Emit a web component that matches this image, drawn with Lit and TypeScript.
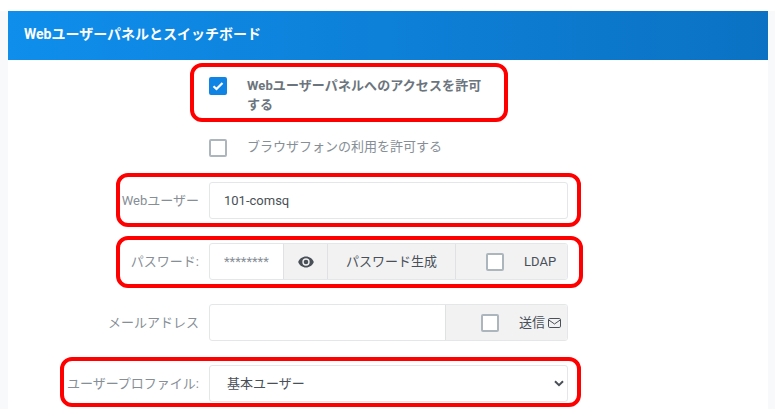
import { LitElement, html, css } from "lit";
import { customElement } from "lit/decorators.js";

@customElement("app-root")
export class AppRoot extends LitElement {
  static styles = css`
    :host {
      display: block;
      width: 775px;
      height: 409px;
      overflow: hidden;
      background: #f8f9fa;
      font-family: Roboto, "Noto Sans CJK JP", sans-serif;
      font-size: 13px;
      line-height: 19.5px;
      color: #495057;
    }
    * { box-sizing: border-box; }
    .page { padding: 11px 7px 0 8px; height: 409px; background: linear-gradient(#fff 11px, #f8f9fa 11px); }
    .card { background: #fff; height: 398px; position: relative; }
    .head {
      height: 49px;
      padding: 0 16px;
      display: flex;
      align-items: center;
      color: #fff;
      font-size: 14px;
      font-weight: 700;
      padding-bottom: 2px;
      background: linear-gradient(90deg, #0f8eec, #0b72c3);
    }
    .body {
      display: grid;
      grid-template-columns: 191px 359px;
      column-gap: 10px;
      padding-top: 11px;
      align-items: center;
    }
    .check-row {
      grid-column: 2;
      display: flex;
      gap: 20px;
      align-items: flex-start;
      width: 285px;
    }
    .check-row .box { margin-top: 6px; }
    .first { height: 59px; }
    .first span { padding-top: 5px; line-height: 19px; color: #6c757d; font-weight: 700; width: 240px; letter-spacing: 0.1px; }
    .second { height: 52px; padding-top: 3px; white-space: nowrap; }
    .second span { padding-top: 4px; color: #868e96; }
    .box {
      width: 18px;
      height: 18px;
      flex: none;
      border: 2px solid #adb5bd;
      border-radius: 2px;
      background: #fff;
      display: flex;
      align-items: center;
      justify-content: center;
    }
    .box.on { background: #0f84e4; border-color: #0f84e4; }
    .label { text-align: right; color: #868e96; white-space: nowrap; justify-self: end; margin-bottom: 24px; }
    .label.last { margin-bottom: 0; }
    .control {
      height: 37px;
      display: flex;
      border: 1px solid #e4e6e8;
      border-radius: 3px;
      background: #fff;
      overflow: hidden;
      margin-bottom: 24px;
    }
    .value { padding-left: 14px; display: flex; align-items: center; color: #495057; }
    .grow { flex: 1; }
    .pw { width: 73px; color: #868e96; }
    .addon {
      display: flex;
      align-items: center;
      justify-content: center;
      background: #f2f2f3;
      border-left: 1px solid #dfe1e3;
    }
    .eye { width: 44px; }
    .gen { width: 128px; }
    .ldap { flex: 1; gap: 20px; justify-content: flex-start; padding-left: 30px; }
    .send { width: 122px; justify-content: flex-start; padding-left: 35px; gap: 20px; }
    .send span { display: flex; align-items: center; gap: 3px; }
    .select { justify-content: space-between; align-items: center; margin-bottom: 0; padding-right: 3px; }
    .select .value { padding-left: 17px; }
    .mark {
      position: absolute;
      border: 4px solid #f00;
      border-radius: 12px;
      pointer-events: none;
    }
    .m1 { left: 182px; top: 52px; width: 318px; height: 59px; }
    .m2 { left: 108px; top: 162px; width: 465px; height: 54px; }
    .m3 { left: 108px; top: 225px; width: 467px; height: 52px; }
    .m4 { left: 52px; top: 346px; width: 521px; height: 50px; }
  `;

  render() {
    return html`
      <div class="page">
        <div class="card">
          <div class="head">Webユーザーパネルとスイッチボード</div>
          <div class="body">
            <div class="check-row first">
              <div class="box on">
                <svg width="12" height="10" viewBox="0 0 12 10"><path d="M1.5 5.2 4.5 8 10.5 2" fill="none" stroke="#fff" stroke-width="2.2"/></svg>
              </div>
              <span>Webユーザーパネルへのアクセスを許可する</span>
            </div>
            <div class="check-row second">
              <div class="box"></div>
              <span>ブラウザフォンの利用を許可する</span>
            </div>

            <div class="label">Webユーザー</div>
            <div class="control"><div class="value">101-comsq</div></div>

            <div class="label">パスワード:</div>
            <div class="control">
              <div class="value pw">********</div>
              <div class="addon eye">
                <svg width="16" height="12" viewBox="0 0 16 12"><path fill="#495057" fill-rule="evenodd" d="M8 .5C4.400.5 1.400 2.800.2 6c1.200 3.200 4.200 5.500 7.800 5.500s6.600-2.300 7.800-5.500C14.600 2.800 11.600.5 8 .5Zm0 9.200A3.700 3.700 0 1 1 8 2.300a3.700 3.700 0 0 1 0 7.400Zm0-6a2.300 2.300 0 1 0 0 4.600 2.300 2.300 0 0 0 0-4.600Z"/></svg>
              </div>
              <div class="addon gen">パスワード生成</div>
              <div class="addon ldap"><div class="box"></div><span>LDAP</span></div>
            </div>

            <div class="label">メールアドレス</div>
            <div class="control">
              <div class="grow"></div>
              <div class="addon send">
                <div class="box"></div>
                <span>送信<svg width="13" height="10" viewBox="0 0 13 10"><rect x=".5" y=".5" width="12" height="9" rx="1.3" fill="none" stroke="#495057"/><path d="M.8 2 6.500 6 12.200 2" fill="none" stroke="#495057"/></svg></span>
              </div>
            </div>

            <div class="label last">ユーザープロファイル:</div>
            <div class="control select">
              <div class="value">基本ユーザー</div>
              <svg width="10" height="7" viewBox="0 0 10 7"><path d="M1 1.200 5 5.200 9 1.200" fill="none" stroke="#495057" stroke-width="2"/></svg>
            </div>
          </div>
          <div class="mark m1"></div>
          <div class="mark m2"></div>
          <div class="mark m3"></div>
          <div class="mark m4"></div>
        </div>
      </div>
    `;
  }
}
